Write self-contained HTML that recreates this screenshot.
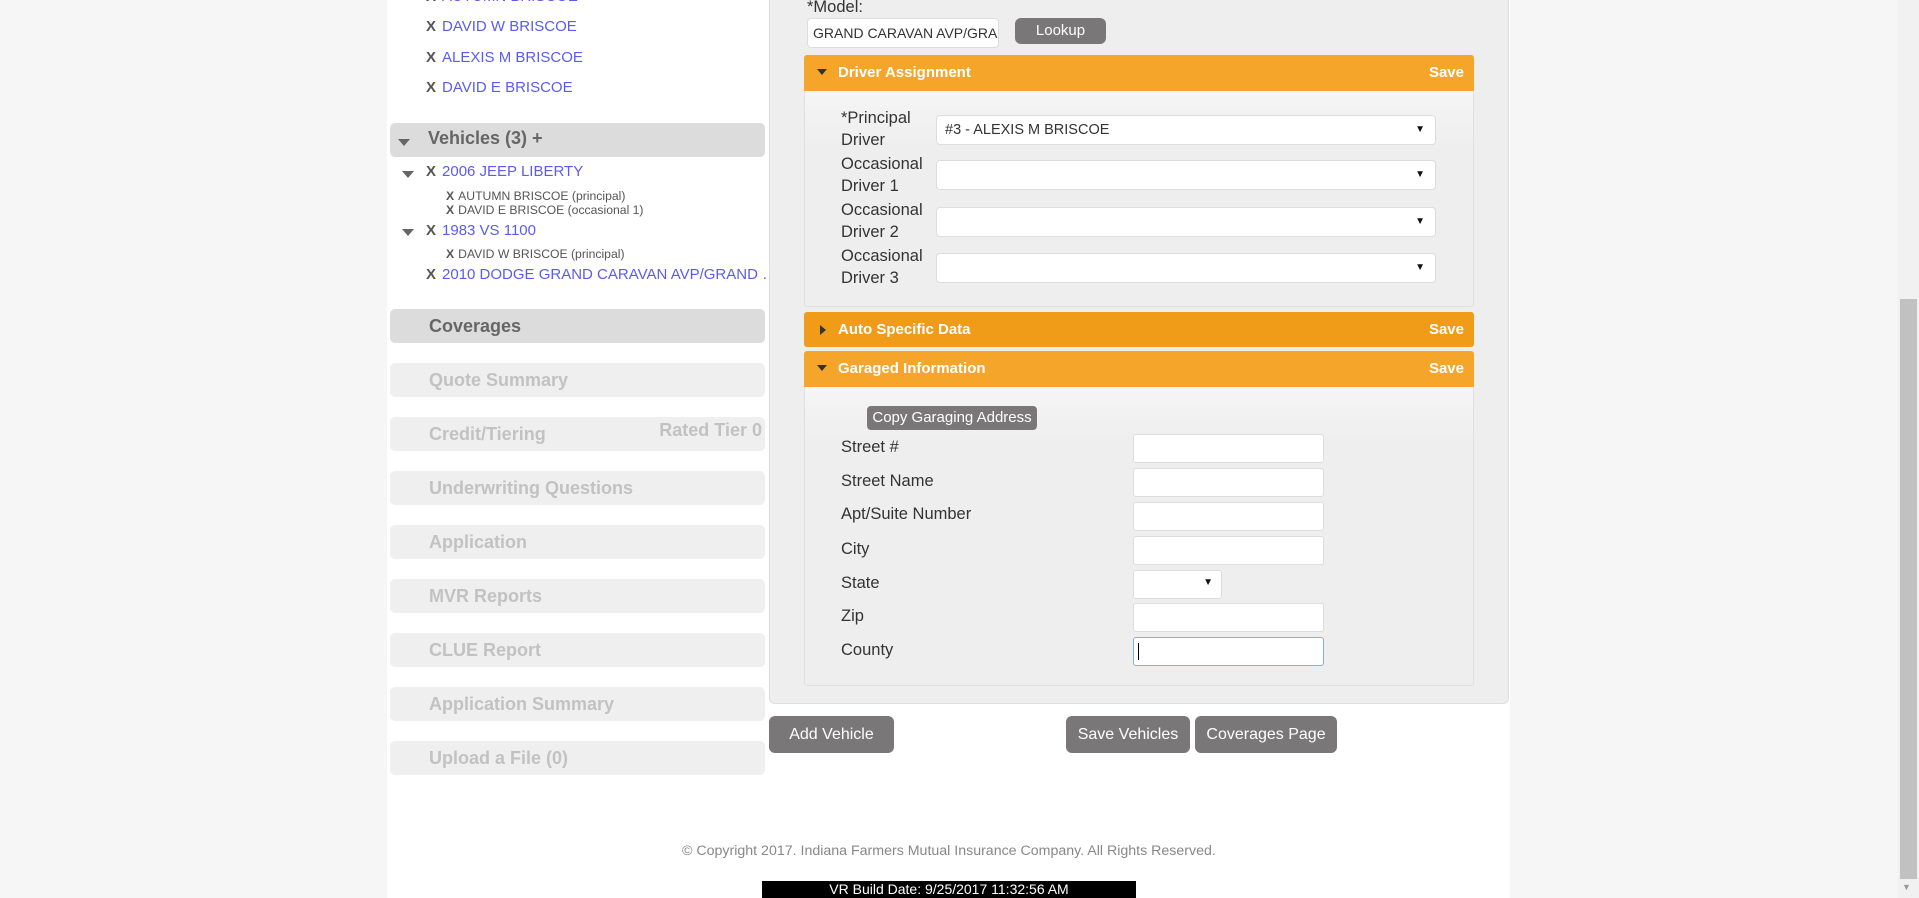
<!DOCTYPE html>
<html><head><meta charset="utf-8"><style>
*{box-sizing:border-box;margin:0;padding:0}
body{width:1919px;height:898px;overflow:hidden;background:#f6f6f6;font-family:"Liberation Sans",sans-serif;position:relative;color:#333}
.a{position:absolute;white-space:nowrap}
#content{left:387px;top:0;width:1123px;height:898px;background:#fff}
.nm{font-size:15px;color:#5b5bf0}
.nm b{color:#555;margin-right:6px;font-size:15px}
.sub{font-size:12.2px;color:#555}
.sub b{margin-right:4px}
.nav{left:390px;width:375px;height:34px;border-radius:5px;background:#efefef;color:#c2c2c2;font-weight:bold;font-size:18px;padding-left:39px;line-height:34px}
.tri{width:0;height:0;border-left:6px solid transparent;border-right:6px solid transparent;border-top:7px solid #666}
.hdr{left:804px;width:670px;height:36px;background:#f5a62a;color:#fff;font-weight:bold;font-size:15px;line-height:36px;padding-left:34px;border-radius:3px 3px 0 0}
.hdr .s{position:absolute;right:10px;top:0}
.wt{position:absolute;left:13px;top:14px;width:0;height:0;border-left:5px solid transparent;border-right:5px solid transparent;border-top:6px solid #333}
.rt{position:absolute;left:16px;top:13px;width:0;height:0;border-top:5px solid transparent;border-bottom:5px solid transparent;border-left:6px solid #333}
.lbl{font-size:16.5px;color:#333}
.sel{left:936px;width:500px;height:30px;background:#fff;border:1px solid #ddd;border-radius:4px;font-size:14.5px;line-height:28px;padding-left:8px}
.sel:after{content:"▼";position:absolute;right:10px;top:0;font-size:10px;color:#111}
.inp{left:1133px;width:191px;height:29px;background:#fff;border:1px solid #ddd;border-radius:3px}
.btn{background:#797777;color:#fff;border-radius:6px;font-size:16px;text-align:center}
</style></head><body>
<div class="a" id="content"></div>
<div class="a" style="left:1898px;top:0;width:21px;height:898px;background:#f1f1f1"></div>
<div class="a" style="left:1900px;top:299px;width:17px;height:580px;background:#c1c1c1"></div>
<div class="a" style="left:1902px;top:882px;font-size:9px;color:#999">▼</div>

<div class="a nm" style="left:426px;top:-12px"><b>X</b>AUTUMN BRISCOE</div>
<div class="a nm" style="left:426px;top:18px"><b>X</b>DAVID W BRISCOE</div>
<div class="a nm" style="left:426px;top:49px"><b>X</b>ALEXIS M BRISCOE</div>
<div class="a nm" style="left:426px;top:79px"><b>X</b>DAVID E BRISCOE</div>

<div class="a" style="left:390px;top:123px;width:375px;height:34px;background:#dcdcdc;border-radius:5px"></div>
<div class="a tri" style="left:398px;top:139px"></div>
<div class="a" style="left:428px;top:128px;font-size:18px;font-weight:bold;color:#666">Vehicles (3) +</div>

<div class="a tri" style="left:402px;top:171px;border-top-color:#666"></div>
<div class="a nm" style="left:426px;top:163px"><b>X</b>2006 JEEP LIBERTY</div>
<div class="a sub" style="left:446px;top:189px"><b>X</b>AUTUMN BRISCOE (principal)</div>
<div class="a sub" style="left:446px;top:203px"><b>X</b>DAVID E BRISCOE (occasional 1)</div>
<div class="a tri" style="left:402px;top:229px"></div>
<div class="a nm" style="left:426px;top:222px"><b>X</b>1983 VS 1100</div>
<div class="a sub" style="left:446px;top:247px"><b>X</b>DAVID W BRISCOE (principal)</div>
<div class="a nm" style="left:426px;top:266px"><b>X</b>2010 DODGE GRAND CARAVAN AVP/GRAND …</div>

<div class="a nav" style="top:309px;background:#dcdcdc;color:#666">Coverages</div>
<div class="a nav" style="top:363px">Quote Summary</div>
<div class="a nav" style="top:417px">Credit/Tiering<span style="position:absolute;right:3px;top:-4px">Rated Tier 0</span></div>
<div class="a nav" style="top:471px">Underwriting Questions</div>
<div class="a nav" style="top:525px">Application</div>
<div class="a nav" style="top:579px">MVR Reports</div>
<div class="a nav" style="top:633px">CLUE Report</div>
<div class="a nav" style="top:687px">Application Summary</div>
<div class="a nav" style="top:741px">Upload a File (0)</div>

<div class="a" style="left:769px;top:-5px;width:740px;height:709px;background:#eee;border:1px solid #ddd;border-radius:0 0 6px 6px"></div>
<div class="a lbl" style="left:807px;top:-2px">*Model:</div>
<div class="a" style="left:807px;top:18px;width:192px;height:30px;background:#fff;border:1px solid #ddd;border-radius:4px;font-size:14px;line-height:28px;padding-left:5px;overflow:hidden">GRAND CARAVAN AVP/GRAN</div>
<div class="a btn" style="left:1015px;top:18px;width:91px;height:26px;line-height:26px;font-size:15px">Lookup</div>

<div class="a" style="left:804px;top:55px;width:670px;height:252px;background:linear-gradient(#fafafa,#eee 90px);border:1px solid #e0e0e0;border-radius:3px"></div>
<div class="a hdr" style="top:55px"><span class="wt"></span>Driver Assignment<span class="s">Save</span></div>
<div class="a lbl" style="left:841px;top:107px;line-height:22px">*Principal<br>Driver</div>
<div class="a sel" style="top:115px">#3 - ALEXIS M BRISCOE</div>
<div class="a lbl" style="left:841px;top:153px;line-height:22px">Occasional<br>Driver 1</div>
<div class="a sel" style="top:160px"></div>
<div class="a lbl" style="left:841px;top:199px;line-height:22px">Occasional<br>Driver 2</div>
<div class="a sel" style="top:207px"></div>
<div class="a lbl" style="left:841px;top:245px;line-height:22px">Occasional<br>Driver 3</div>
<div class="a sel" style="top:253px"></div>

<div class="a hdr" style="top:312px;height:35px;line-height:35px;background:#f09c19;border-radius:3px"><span class="rt"></span>Auto Specific Data<span class="s">Save</span></div>

<div class="a" style="left:804px;top:351px;width:670px;height:335px;background:linear-gradient(#fafafa,#eee 90px);border:1px solid #e0e0e0;border-radius:3px"></div>
<div class="a hdr" style="top:351px"><span class="wt"></span>Garaged Information<span class="s">Save</span></div>
<div class="a btn" style="left:867px;top:406px;width:170px;height:24px;line-height:24px;font-size:15px;border-radius:4px">Copy Garaging Address</div>
<div class="a lbl" style="left:841px;top:438px">Street #</div><div class="a inp" style="top:434px"></div>
<div class="a lbl" style="left:841px;top:472px">Street Name</div><div class="a inp" style="top:468px"></div>
<div class="a lbl" style="left:841px;top:505px">Apt/Suite Number</div><div class="a inp" style="top:502px"></div>
<div class="a lbl" style="left:841px;top:540px">City</div><div class="a inp" style="top:536px"></div>
<div class="a lbl" style="left:841px;top:574px">State</div><div class="a inp" style="top:570px;width:89px"><span style="position:absolute;right:8px;top:6px;font-size:10px;color:#111">▼</span></div>
<div class="a lbl" style="left:841px;top:607px">Zip</div><div class="a inp" style="top:603px"></div>
<div class="a lbl" style="left:841px;top:641px">County</div><div class="a inp" style="top:637px;border-color:#7fb2e5"><span style="position:absolute;left:4px;top:5px;width:1px;height:17px;background:#000"></span></div>

<div class="a btn" style="left:769px;top:716px;width:125px;height:37px;line-height:37px">Add Vehicle</div>
<div class="a btn" style="left:1066px;top:716px;width:124px;height:37px;line-height:37px">Save Vehicles</div>
<div class="a btn" style="left:1195px;top:716px;width:142px;height:37px;line-height:37px">Coverages Page</div>

<div class="a" style="left:682px;top:843px;font-size:14.2px;color:#888">© Copyright 2017. Indiana Farmers Mutual Insurance Company. All Rights Reserved.</div>
<div class="a" style="left:762px;top:881px;width:374px;height:17px;background:#000;color:#fff;font-size:14px;line-height:17px;text-align:center">VR Build Date: 9/25/2017 11:32:56 AM</div>
</body></html>
